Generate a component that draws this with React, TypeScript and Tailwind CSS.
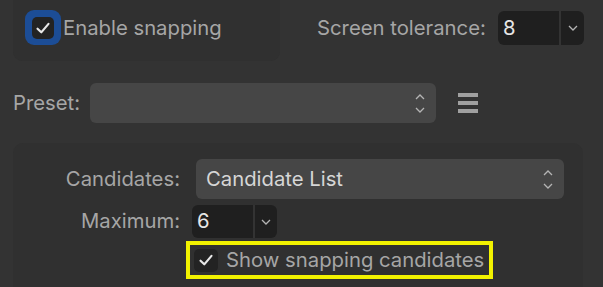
import React from "react";

function Check({ size = 16 }: { size?: number }) {
  return (
    <svg width={size} height={size} viewBox="0 0 14 14" fill="none">
      <path
        d="M2.2 7.6 L5.5 10.8 L11.8 3.4"
        stroke="#e8e8e8"
        strokeWidth="1.9"
        strokeLinecap="round"
        strokeLinejoin="round"
      />
    </svg>
  );
}

function ChevronDown() {
  return (
    <svg width="10" height="6" viewBox="0 0 10 6" fill="none">
      <path d="M1 1 L5 5 L9 1" stroke="#b4b4b4" strokeWidth="1.3" />
    </svg>
  );
}

function UpDown() {
  return (
    <div className="flex flex-col items-center gap-[7px]">
      <svg width="10" height="6" viewBox="0 0 10 6" fill="none">
        <path d="M1 5 L5 1 L9 5" stroke="#b4b4b4" strokeWidth="1.3" />
      </svg>
      <svg width="10" height="6" viewBox="0 0 10 6" fill="none">
        <path d="M1 1 L5 5 L9 1" stroke="#b4b4b4" strokeWidth="1.3" />
      </svg>
    </div>
  );
}

function NumberBox({ value, width, height, split }: { value: string; width: number; height: number; split: number }) {
  return (
    <div
      className="flex shrink-0 overflow-hidden rounded-[6px] bg-[#1f1f1f]"
      style={{ width, height }}
    >
      <div className="flex items-center pl-[5px] text-[#e6e6e6]" style={{ width: split }}>
        {value}
      </div>
      <div className="w-[2px] bg-[#333333]" />
      <div className="flex flex-1 items-center justify-center">
        <ChevronDown />
      </div>
    </div>
  );
}

export default function App() {
  return (
    <div className="h-[287px] w-[603px] overflow-hidden whitespace-nowrap bg-[#333333] font-['Inter','Liberation_Sans',sans-serif] text-[20.3px] leading-none text-[#a6a6a6]">
      {/* Top row */}
      <div className="flex h-[62px] items-start">
        <div className="-mt-[10px] ml-[13px] flex h-[71px] w-[267px] shrink-0 items-start rounded-[9px] bg-[#303030] pl-[12px] pt-[20px]">
          <div className="flex h-[35px] w-[36px] items-center justify-center rounded-[9px] bg-[#1c4d96]">
            <div className="flex h-[22px] w-[22px] items-center justify-center rounded-[5px] bg-[#232323]">
              <Check />
            </div>
          </div>
          <span className="ml-[2px] mt-[8px]">Enable snapping</span>
        </div>
        <div className="ml-[37px] mt-[11px] flex h-[34px] items-center">
          <span className="w-[168px] shrink-0">Screen tolerance:</span>
          <div className="ml-[13px]">
            <NumberBox value="8" width={86} height={34} split={61} />
          </div>
        </div>
      </div>

      {/* Preset row */}
      <div className="mt-[21px] flex h-[40px] items-center">
        <span className="w-[90px] shrink-0 pl-[13px]">Preset:</span>
        <div className="flex h-[40px] w-[346px] shrink-0 items-center justify-end rounded-[6px] bg-[#464646] pr-[11px]">
          <UpDown />
        </div>
        <div className="ml-[22px] flex w-[20px] flex-col gap-[4px]">
          <div className="h-[4px] bg-[#a0a0a0]" />
          <div className="h-[4px] bg-[#a0a0a0]" />
          <div className="h-[4px] bg-[#a0a0a0]" />
        </div>
      </div>

      {/* Lower panel */}
      <div className="ml-[13px] mt-[20px] h-[170px] w-[570px] rounded-[10px] bg-[#303030] pt-[16px]">
        <div className="flex h-[40px] items-center">
          <span className="w-[167px] shrink-0 text-right">Candidates:</span>
          <div className="ml-[16px] flex h-[40px] w-[368px] shrink-0 items-center justify-between rounded-[6px] bg-[#464646] pl-[10px] pr-[11px] text-[#d6d6d6]">
            <span>Candidate List</span>
            <UpDown />
          </div>
        </div>
        <div className="mt-[6px] flex h-[33px] items-center">
          <span className="w-[167px] shrink-0 text-right">Maximum:</span>
          <div className="ml-[12px]">
            <NumberBox value="6" width={85} height={33} split={61} />
          </div>
        </div>
        <div className="ml-[173px] mt-[3px] flex h-[38px] w-[307px] items-center border-[4px] border-[#f2f200] pl-[4px]">
          <div className="flex h-[23px] w-[24px] shrink-0 items-center justify-center rounded-[5px] bg-[#232323]">
            <Check />
          </div>
          <span className="ml-[8px]">Show snapping candidates</span>
        </div>
      </div>
    </div>
  );
}
